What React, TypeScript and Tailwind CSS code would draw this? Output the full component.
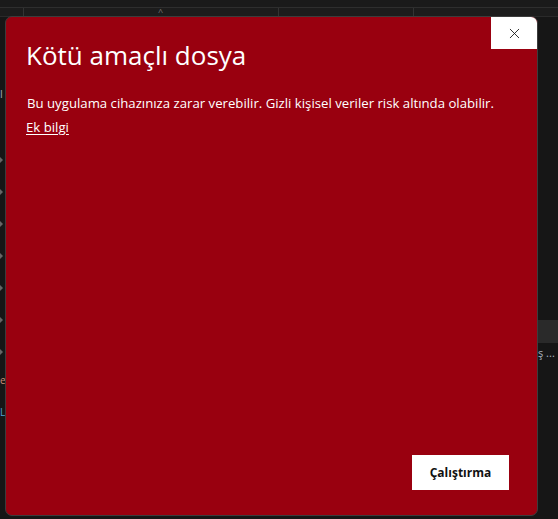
import { X } from "lucide-react";

const arrows = [157, 189, 221, 253, 285, 317, 349];

function App() {
  return (
    <div className="relative w-[558px] h-[519px] overflow-hidden bg-[#161616] font-['Open_Sans',sans-serif]">
      {/* background app behind the dialog */}
      <div className="h-[8px] border-b border-[#2e2e2e] bg-[#1a1a1a]" />
      <div className="flex h-[9px] bg-[#1c1c1c] border-b border-[#2a2a2a]">
        <div className="w-[24px] border-r border-[#333]" />
        <div className="relative w-[255px] border-r border-[#333]">
          <span className="absolute left-[134px] -top-[3px] text-[9px] text-[#777]">^</span>
        </div>
        <div className="w-[135px] border-r border-[#333]" />
        <div className="flex-1" />
      </div>
      {arrows.map((y) => (
        <div key={y} className="absolute left-0 w-0 h-0 border-y-[3px] border-y-transparent border-l-[3px] border-l-[#666]" style={{ top: y }} />
      ))}
      <span className="absolute left-0 top-[86px] text-[11px] text-[#9aa6b8]">l</span>
      <span className="absolute left-0 top-[373px] text-[10px] text-[#ce9178]">e</span>
      <span className="absolute left-0 top-[405px] text-[10px] text-[#4fa3d8]">L</span>
      <div className="absolute left-[537px] top-[320px] w-[21px] h-[23px] bg-[#2a2a2a]" />
      <span className="absolute left-[538px] top-[345px] text-[11px] text-[#aab4c0]">ş ...</span>

      {/* dialog */}
      <div className="absolute left-[5px] top-[16px] w-[533px] h-[500px] flex flex-col rounded-[7px] border border-[#3c3c3c] bg-[#99000f] overflow-hidden">
        <div className="flex justify-end">
          <button className="flex items-center justify-center w-[46px] h-[32px] bg-white text-[#111]">
            <X size={17} strokeWidth={1.2} />
          </button>
        </div>
        <div className="pl-[20px] pr-[16px]">
          <h1 className="text-[26px] leading-[32px] text-white font-normal -mt-[10px]">Kötü amaçlı dosya</h1>
          <p className="mt-[21px] pl-[1px] text-[13.2px] leading-[22px] text-white">
            Bu uygulama cihazınıza zarar verebilir. Gizli kişisel veriler risk altında olabilir.
          </p>
          <a className="text-[13.2px] leading-[20px] text-white underline underline-offset-2">Ek bilgi</a>
        </div>
        <div className="flex-1" />
        <div className="flex justify-end pr-[28px] pb-[25px]">
          <button className="w-[97px] h-[35px] bg-white text-[12px] font-bold text-[#111]">Çalıştırma</button>
        </div>
      </div>
    </div>
  );
}

export default App
